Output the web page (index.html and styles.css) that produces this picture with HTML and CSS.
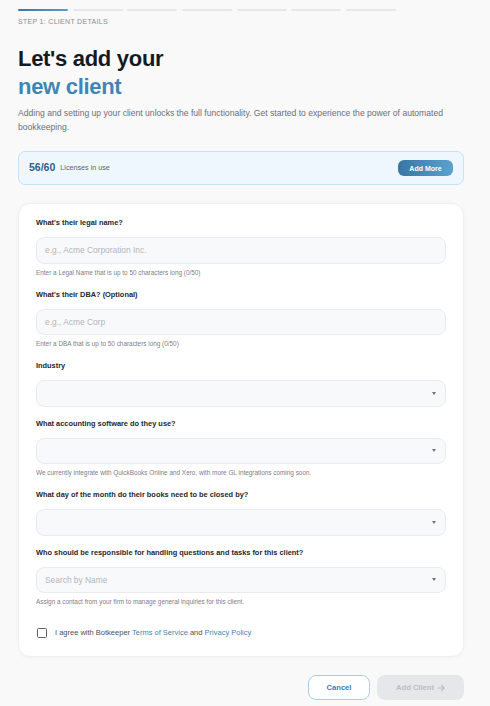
FILE: index.html
```html
<!DOCTYPE html>
<html lang="en">
    <head>
        <meta charset="utf-8">
        <title>Add client</title>
        <meta name="viewport" content="width=device-width, initial-scale=1.0">
        <link rel="stylesheet" href="styles.css">
    </head>
    <body>
        <main class="page">
            <div class="steps">
                <span class="step active"></span>
                <span class="step"></span>
                <span class="step"></span>
                <span class="step"></span>
                <span class="step"></span>
                <span class="step"></span>
                <span class="step"></span>
            </div>
            <div class="step-label">Step 1: Client details</div>

            <h1 class="title">Let's add your <span class="accent">new client</span></h1>
            <p class="intro">Adding and setting up your client unlocks the full functionality. Get started to experience the power of automated bookkeeping.</p>

            <section class="licenses">
                <div class="licenses-count">
                    <strong>56/60</strong>
                    <span>Licenses in use</span>
                </div>
                <button class="btn-add-more">Add More</button>
            </section>

            <form class="card">
                <div class="field">
                    <label>What's their legal name?</label>
                    <div class="input"><span class="placeholder">e.g., Acme Corporation Inc.</span></div>
                    <div class="help">Enter a Legal Name that is up to 50 characters long (0/50)</div>
                </div>
                <div class="field">
                    <label>What's their DBA? (Optional)</label>
                    <div class="input"><span class="placeholder">e.g., Acme Corp</span></div>
                    <div class="help">Enter a DBA that is up to 50 characters long (0/50)</div>
                </div>
                <div class="field">
                    <label>Industry</label>
                    <div class="input select"><span class="placeholder"></span><i class="caret"></i></div>
                </div>
                <div class="field">
                    <label>What accounting software do they use?</label>
                    <div class="input select"><span class="placeholder"></span><i class="caret"></i></div>
                    <div class="help">We currently integrate with QuickBooks Online and Xero, with more GL integrations coming soon.</div>
                </div>
                <div class="field">
                    <label>What day of the month do their books need to be closed by?</label>
                    <div class="input select"><span class="placeholder"></span><i class="caret"></i></div>
                </div>
                <div class="field">
                    <label>Who should be responsible for handling questions and tasks for this client?</label>
                    <div class="input select"><span class="placeholder">Search by Name</span><i class="caret"></i></div>
                    <div class="help">Assign a contact from your firm to manage general inquiries for this client.</div>
                </div>
                <div class="agree">
                    <span class="checkbox"></span>
                    <span>I agree with Botkeeper <a href="#">Terms of Service</a> and <a href="#">Privacy Policy</a></span>
                </div>
            </form>

            <div class="actions">
                <button class="btn-cancel">Cancel</button>
                <button class="btn-submit" disabled>Add Client
                    <svg width="8" height="8" viewBox="0 0 10 10"><path d="M1 5h8M5.5 1.5L9 5 5.5 8.5" fill="none" stroke="currentColor" stroke-width="1.4"/></svg>
                </button>
            </div>
        </main>
    </body>
</html>
```

FILE: styles.css
```css
body {
    margin: 0;
    background-color: #f9f9fa;
    font-family: "Liberation Sans", Arial, sans-serif;
    color: #1f2430;
}

.page {
    width: 446px;
    margin-left: 18px;
    padding-top: 9px;
}

.steps {
    display: flex;
    gap: 4.6px;
    width: 378px;
}

.step {
    flex: 1;
    height: 2px;
    border-radius: 1px;
    background-color: #e6e6ee;
}

.step.active {
    background: linear-gradient(90deg, #3a76a4, #5a9fcb);
}

.step-label {
    margin-top: 6px;
    font-size: 7px;
    line-height: 10px;
    letter-spacing: 0.3px;
    text-transform: uppercase;
    color: #8a8d94;
}

.title {
    margin: 18px 0 0;
    font-size: 22px;
    line-height: 28px;
    font-weight: bold;
    letter-spacing: -0.3px;
    color: #141a24;
}

.title .accent {
    display: block;
    color: #3f86b4;
}

.intro {
    margin: 5px 0 0;
    font-size: 8.6px;
    line-height: 14px;
    color: #6b6f78;
}

.licenses {
    display: flex;
    align-items: center;
    justify-content: space-between;
    margin-top: 17px;
    height: 34px;
    padding: 0 10px 0 10px;
    border: 1px solid #c3e4fa;
    border-radius: 7px;
    background-color: #eff7fe;
    box-sizing: border-box;
}

.licenses-count {
    display: flex;
    align-items: center;
    gap: 5px;
    margin-top: -2px;
}

.licenses-count strong {
    font-size: 10.5px;
    color: #2f5d8c;
}

.licenses-count span {
    font-size: 7.2px;
    color: #5f636b;
}

.btn-add-more {
    width: 55px;
    height: 16px;
    padding: 0;
    border: none;
    border-radius: 6px;
    background: linear-gradient(90deg, #3a76a4, #5aa2cf);
    color: #fff;
    font-family: inherit;
    font-size: 7px;
    font-weight: bold;
}

.card {
    margin-top: 18px;
    padding: 14px 17px 18px;
    background-color: #fff;
    border: 1px solid #f0f0f2;
    border-radius: 12px;
    box-shadow: 0 1px 4px rgba(0, 0, 0, 0.03);
    display: flex;
    flex-direction: column;
    gap: 12px;
}

.field {
    display: flex;
    flex-direction: column;
}

.field label {
    font-size: 7.4px;
    line-height: 10px;
    font-weight: bold;
    color: #23272f;
}

.input {
    display: flex;
    align-items: center;
    justify-content: space-between;
    height: 26.5px;
    margin-top: 9px;
    padding: 0 9px 0 8px;
    border: 1px solid #e9ebef;
    border-radius: 8px;
    background-color: #f8f9fb;
    box-sizing: border-box;
}

.placeholder {
    font-size: 8.4px;
    color: #b3b6bc;
}

.caret {
    width: 0;
    height: 0;
    border-left: 2.5px solid transparent;
    border-right: 2.5px solid transparent;
    border-top: 3px solid #707379;
}

.help {
    margin-top: 4px;
    font-size: 6.4px;
    line-height: 10px;
    color: #7d8088;
}

.agree {
    display: flex;
    align-items: center;
    gap: 8px;
    margin-top: 9px;
    padding-left: 1px;
    font-size: 7.5px;
    line-height: 10px;
    color: #4b4f57;
}

.checkbox {
    width: 8px;
    height: 8px;
    border: 1.3px solid #5e6168;
    border-radius: 1.5px;
}

.agree a {
    color: #3f86b4;
    text-decoration: none;
}

.actions {
    display: flex;
    justify-content: flex-end;
    gap: 7px;
    margin-top: 18px;
}

.btn-cancel {
    width: 62px;
    height: 25px;
    border: 1px solid #a9cfe8;
    border-radius: 8px;
    background-color: #fff;
    color: #3d7fac;
    font-family: inherit;
    font-size: 7.6px;
    font-weight: bold;
}

.btn-submit {
    display: flex;
    align-items: center;
    justify-content: center;
    gap: 3px;
    width: 87px;
    height: 25px;
    border: none;
    border-radius: 8px;
    background-color: #e5e7eb;
    color: #b9bdc4;
    font-family: inherit;
    font-size: 7.6px;
    font-weight: bold;
}
```
